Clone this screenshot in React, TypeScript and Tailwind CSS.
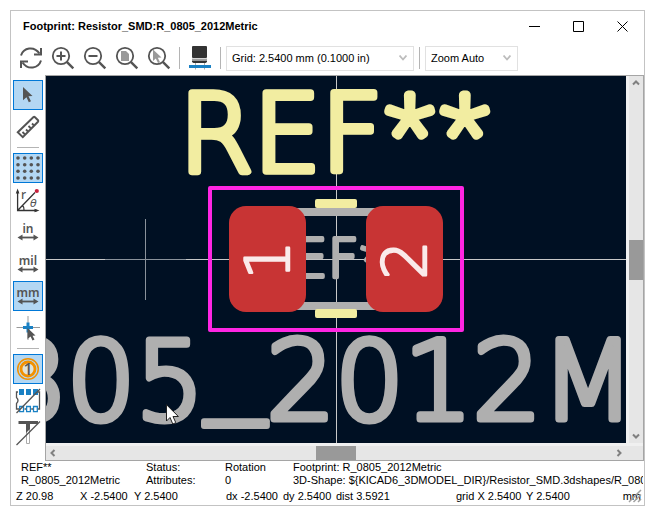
import type { ReactNode } from "react";

const INK = "#545454";

function ToolButton({ label, children }: { label: string; children: ReactNode }) {
  return (
    <button type="button" aria-label={label} title={label} className="mr-2 h-6 w-6 shrink-0">
      <svg viewBox="0 0 24 24" className="block h-6 w-6" fill="none" stroke={INK} strokeWidth="1.8">
        {children}
      </svg>
    </button>
  );
}

function Lens() {
  return (
    <>
      <circle cx="10" cy="10" r="8.2" />
      <path d="M15.8 15.8L22.3 22.3" strokeWidth="2.4" />
    </>
  );
}

function SideButton({ label, active = false, children }: { label: string; active?: boolean; children: ReactNode }) {
  return (
    <button
      type="button"
      aria-label={label}
      title={label}
      aria-pressed={active}
      className={
        active
          ? "h-[30px] w-[30px] shrink-0 border border-[#0078d7] bg-[#b3d7f3]"
          : "h-[30px] w-[30px] shrink-0 border border-transparent"
      }
    >
      <svg viewBox="1 1 28 28" className="block h-7 w-7" fill="none" stroke={INK} strokeWidth="1.6">
        {children}
      </svg>
    </button>
  );
}

function UnitIcon({ unit }: { unit: string }) {
  return (
    <>
      <text x="15" y="16" textAnchor="middle" fontFamily="Noto Sans, sans-serif" fontSize="12" fontWeight="600" fill={INK} stroke="none">
        {unit}
      </text>
      <path d="M7 20.5H23" strokeWidth="1.8" />
      <path d="M4.5 20.5L9.5 17.5V23.5ZM25.5 20.5L20.5 17.5V23.5Z" fill={INK} stroke="none" />
    </>
  );
}

function SideSeparator() {
  return <div className="my-[5px] h-px w-[22px] shrink-0 bg-[#b4b4b4]" />;
}

function ToolSeparator() {
  return <div className="h-[22px] w-px shrink-0 bg-[#b4b4b4]" />;
}

function Dropdown({ label, value, width }: { label: string; value: string; width: string }) {
  return (
    <div className={`relative mx-[5px] shrink-0 ${width}`}>
      <select
        aria-label={label}
        defaultValue={value}
        className="block h-[25px] w-full appearance-none border border-[#e1e1e1] bg-white pl-[5px] text-[11px] text-black"
      >
        <option>{value}</option>
      </select>
      <svg viewBox="0 0 8 6" className="pointer-events-none absolute right-[7px] top-[9px] h-1.5 w-2" fill="none" stroke="#bcbcbc" strokeWidth="1.8">
        <path d="M0.5 0.5L4 4.5L7.5 0.5" />
      </svg>
    </div>
  );
}

function ScrollArrow({ label, d }: { label: string; d: string }) {
  return (
    <button type="button" aria-label={label} className="flex h-[14px] w-[14px] shrink-0 items-center justify-center">
      <svg viewBox="0 0 8 8" className="h-2 w-2" fill="none" stroke="#808080" strokeWidth="2">
        <path d={d} />
      </svg>
    </button>
  );
}

function FootprintCanvas() {
  return (
    <svg
      viewBox="46 76 580 367"
      preserveAspectRatio="xMidYMid slice"
      className="block h-full w-full bg-[#001023]"
      fontFamily="DejaVu Sans, sans-serif"
      fontWeight="200"
      strokeLinejoin="round"
      strokeLinecap="round"
    >
      <g fill="#c8c8c8">
        <rect x="46" y="259" width="580" height="1" />
        <rect x="336" y="76" width="1" height="367" />
      </g>

      <text x="256" y="277" fontSize="54" fill="#afafaf" stroke="#afafaf" strokeWidth="4">
        REF<tspan fontFamily="Noto Sans" fontWeight="100" fontSize="52" dy="2">**</tspan>
      </text>

      <g fill="#afafaf">
        <rect x="290" y="208" width="92" height="8" />
        <rect x="290" y="302" width="92" height="8" />
      </g>
      <g fill="#f2eda1">
        <rect x="315" y="199" width="42" height="9" rx="2" />
        <rect x="315" y="309" width="42" height="9" rx="2" />
      </g>

      <text x="179" y="171" fontSize="107" fill="#f2eda1" stroke="#f2eda1" strokeWidth="7.5">
        REF<tspan fontFamily="Noto Sans" fontWeight="100" fontSize="100" strokeWidth="9">**</tspan>
      </text>
      <text x="-2" y="419" fontSize="108" fill="#afafaf" stroke="#afafaf" strokeWidth="7">
        805<tspan fontFamily="Liberation Mono" fontWeight="400" fontSize="104" strokeWidth="6" dy="-4">_</tspan><tspan dy="4">2012M</tspan>
      </text>

      <rect x="210" y="188" width="252" height="142" fill="none" stroke="#ff26e2" strokeWidth="4" />

      <g fill="#c83434">
        <rect x="229" y="206" width="77" height="106" rx="17" />
        <rect x="366" y="206" width="77" height="106" rx="17" />
      </g>
      <g fill="#faeaea" stroke="#faeaea" strokeWidth="2.4" fontSize="61" textAnchor="middle">
        <text transform="translate(289 260) rotate(-90)">1</text>
        <text transform="translate(426 260) rotate(-90)">2</text>
      </g>

      <g fill="#8a929b">
        <rect x="105" y="259" width="81" height="1" />
        <rect x="145" y="219" width="1" height="81" />
      </g>
      <path d="M166.5 405V421L170 417.5L172.8 424L175.8 422.7L173 416.5H178Z" fill="#fff" stroke="#222" strokeWidth="1" />
    </svg>
  );
}

export default function App() {
  return (
    <div className="flex min-h-screen bg-white p-[10px] font-['Liberation_Sans',Arial,sans-serif] text-[11px] text-black">
      <div className="flex min-w-0 flex-1 flex-col border border-[#c3c3c3] bg-white">
        <header className="flex h-[30px] shrink-0 items-center pl-3 pr-[14px]">
          <h1 className="flex-1 font-bold">Footprint: Resistor_SMD:R_0805_2012Metric</h1>
          <div className="flex gap-7">
            <button type="button" aria-label="Minimize" className="flex h-4 w-4 items-center justify-center">
              <svg viewBox="0 0 11 11" className="h-[11px] w-[11px]" stroke="#000"><path d="M0 5.5H11" /></svg>
            </button>
            <button type="button" aria-label="Maximize" className="flex h-4 w-4 items-center justify-center">
              <svg viewBox="0 0 11 11" className="h-[11px] w-[11px]" fill="none" stroke="#000"><path d="M0.5 0.5H10.5V10.5H0.5Z" /></svg>
            </button>
            <button type="button" aria-label="Close" className="flex h-4 w-4 items-center justify-center">
              <svg viewBox="0 0 11 11" className="h-[11px] w-[11px]" stroke="#000"><path d="M0.5 0.5L10.5 10.5M10.5 0.5L0.5 10.5" /></svg>
            </button>
          </div>
        </header>

        <div role="toolbar" className="flex h-[34px] shrink-0 items-center pl-2">
          <ToolButton label="Refresh">
            <path d="M2 9.5C4.5 1.5 15 -0.5 20.5 7.5M22 14.5C19.5 22.5 9 24.5 3.5 16.5" strokeWidth="2" />
            <path d="M22 2V8.4H15M2 22V15.6H9" strokeWidth="2" />
          </ToolButton>
          <ToolButton label="Zoom in">
            <Lens />
            <path d="M5.5 10H14.5M10 5.5V14.5" strokeWidth="2" />
          </ToolButton>
          <ToolButton label="Zoom out">
            <Lens />
            <path d="M5.5 10H14.5" strokeWidth="2" />
          </ToolButton>
          <ToolButton label="Zoom to fit">
            <Lens />
            <path d="M6 5H11L14 8V15H6Z" fill="#999" stroke="none" />
          </ToolButton>
          <ToolButton label="Zoom to selection">
            <Lens />
            <path d="M6 3.5L14.5 11.5L10.8 11.8L13 16.2L11 17L8.8 12.6L6 15Z" fill="#999" stroke="none" />
          </ToolButton>
          <ToolSeparator />
          <div className="flex pl-2">
            <ToolButton label="3D viewer">
              <path d="M7.5 16V23.5M16.5 16V23.5" stroke="#aaa" strokeWidth="1" />
              <rect x="4" y="0" width="15" height="12" rx="1" fill="#333" stroke="none" />
              <path d="M4 13.2H19" stroke="#777" strokeWidth="1" />
              <path d="M4 14.5H19V16L17.5 17H5.5L4 16Z" fill="#333" stroke="none" />
              <rect x="1" y="19" width="22" height="3" fill="#1a81c4" stroke="none" />
            </ToolButton>
          </div>
          <ToolSeparator />
          <Dropdown label="Grid" value="Grid: 2.5400 mm (0.1000 in)" width="w-[188px]" />
          <ToolSeparator />
          <Dropdown label="Zoom" value="Zoom Auto" width="w-[93px]" />
        </div>

        <main className="flex min-h-0 flex-1">
          <div role="toolbar" className="flex w-[34px] shrink-0 flex-col items-center pt-[5px]">
            <div className="flex flex-col gap-0.5">
              <SideButton label="Select item" active>
                <path d="M10 7L19.5 16L15.5 16.3L18 21.3L15.8 22.3L13.5 17.3L10 20.3Z" fill={INK} stroke="none" />
              </SideButton>
              <SideButton label="Measure distance">
                <path d="M4.8 20.3L20.5 5Q21.2 4.5 22 5.2L25 8.2Q25.6 9 25 9.7L9.8 25.2Z" strokeWidth="2" />
                <path d="M12 22.5L9.5 20M15 19.5L13 17.5M18 16.5L15.5 14M21 13.5L19 11.5" strokeWidth="1.8" />
              </SideButton>
            </div>
            <SideSeparator />
            <div className="flex flex-col gap-0.5">
              <SideButton label="Show grid" active>
                {[5, 11.7, 18.3, 25].map((y) =>
                  [5, 11.7, 18.3, 25].map((x) => <circle key={`${x}-${y}`} cx={x} cy={y} r="1.8" fill={INK} stroke="none" />),
                )}
              </SideButton>
              <SideButton label="Polar coordinates">
                <path d="M4.6 6V25.5H24M4.6 25.5L22 7.5M9.5 20.5Q11.5 22.5 11 25" strokeWidth="1.3" stroke="#333" />
                <path d="M4.6 3.5L2.8 8.5H6.4ZM26.5 25.5L21.5 23.7V27.3Z" fill="#333" stroke="none" />
                <circle cx="23.8" cy="6" r="2.1" fill="#c8213c" stroke="none" />
                <text x="8" y="14" fontFamily="Noto Sans, sans-serif" fontSize="12" fontWeight="500" fill={INK} stroke="none">r</text>
                <text x="17" y="22" fontFamily="DejaVu Sans, sans-serif" fontSize="11" fontStyle="italic" fill={INK} stroke="none">θ</text>
              </SideButton>
              <SideButton label="Inches"><UnitIcon unit="in" /></SideButton>
              <SideButton label="Mils"><UnitIcon unit="mil" /></SideButton>
              <SideButton label="Millimeters" active><UnitIcon unit="mm" /></SideButton>
              <SideButton label="Full-window crosshair">
                <path d="M3.5 14.5H27M15 3V27" stroke="#999" strokeWidth="1" />
                <path d="M10 14.5H20M15 9.5V19.5" stroke="#1a81c4" strokeWidth="3" />
                <path d="M14.5 15L22.5 22.5L19.5 22.8L21.5 26.6L19.5 27.5L17.6 23.6L14.5 26Z" fill={INK} stroke="none" />
              </SideButton>
            </div>
            <SideSeparator />
            <div className="flex flex-col gap-0.5">
              <SideButton label="Show pad numbers" active>
                <circle cx="15" cy="15" r="10.3" stroke="#f29100" strokeWidth="1.5" />
                <circle cx="15" cy="15" r="7" fill="#dfe3da" stroke="#f29100" strokeWidth="2.8" />
                <text x="15" y="21" textAnchor="middle" fontFamily="Noto Sans, sans-serif" fontSize="17" fontWeight="500" fill={INK} stroke="none">1</text>
              </SideButton>
              <SideButton label="Sketch pads">
                <path d="M5 6H3.5V11.5Q6.5 14.5 3.5 17.5V23H6M24 6H26.5V23H24" strokeWidth="1.3" />
                <path d="M6 3H11V9H6ZM13 3H18V9H13ZM20 3H25V9H20Z" fill="#1a81c4" stroke="none" />
                <path d="M6.7 20.5H10.5V25.7H6.7ZM13.6 20.5H17.4V25.7H13.6ZM20.5 20.5H24.3V25.7H20.5Z" fill="#fff" stroke="#1a81c4" strokeWidth="1.3" />
                <path d="M11.5 23H13M18.2 23H20" strokeWidth="1.3" />
                <path d="M3.5 27L27 3" strokeWidth="1.3" />
              </SideButton>
              <SideButton label="Sketch text">
                <path d="M13.5 13V25.5H16.5V8" stroke="#aaa" strokeWidth="1" />
                <path d="M5.5 3H25V6H17V11L13 15V6H5.5Z" fill={INK} stroke="none" />
                <path d="M3.5 27L27 3.5" strokeWidth="1.3" />
              </SideButton>
            </div>
          </div>

          <div className="flex min-w-0 flex-1 flex-col border border-[#a5a5a5] bg-[#e6e6e6]">
            <div className="flex min-h-0 flex-1">
              <div className="relative min-w-0 flex-1">
                <div className="absolute inset-0">
                  <FootprintCanvas />
                </div>
              </div>
              <div className="flex w-[17px] shrink-0 flex-col items-end justify-between border-l-[3px] border-[#f0f0f0]">
                <ScrollArrow label="Scroll up" d="M1 5.5L4 2.5L7 5.5" />
                <div className="h-10 w-[14px] bg-[#999]" />
                <ScrollArrow label="Scroll down" d="M1 2.5L4 5.5L7 2.5" />
              </div>
            </div>
            <div className="flex h-[17px] shrink-0 items-end justify-between border-t-[3px] border-[#f0f0f0] pr-[17px]">
              <ScrollArrow label="Scroll left" d="M5.5 1L2.5 4L5.5 7" />
              <div className="h-[14px] w-10 bg-[#999]" />
              <ScrollArrow label="Scroll right" d="M2.5 1L5.5 4L2.5 7" />
            </div>
          </div>
        </main>

        <footer className="relative shrink-0 overflow-hidden whitespace-nowrap">
          <div className="grid grid-cols-[125px_79px_68px_minmax(0,1fr)] pl-[10px] pr-px leading-[13px]">
            <span>REF**</span>
            <span>Status:</span>
            <span>Rotation</span>
            <span>Footprint: R_0805_2012Metric</span>
            <span>R_0805_2012Metric</span>
            <span>Attributes:</span>
            <span>0</span>
            <span className="overflow-hidden">{"3D-Shape: ${KICAD6_3DMODEL_DIR}/Resistor_SMD.3dshapes/R_0805_2012Metric.wrl"}</span>
          </div>
          <div className="flex pl-[5px] pr-[3px] leading-[18px]">
            <span className="w-16">Z 20.98</span>
            <span className="w-[54px]">X -2.5400</span>
            <span className="w-[92px]">Y 2.5400</span>
            <span className="w-[57px]">dx -2.5400</span>
            <span className="w-[53px]">dy 2.5400</span>
            <span className="w-[120px]">dist 3.5921</span>
            <span className="w-[70px]">grid X 2.5400</span>
            <span className="flex-1">Y 2.5400</span>
            <span>mm</span>
          </div>
          <svg viewBox="0 0 14 14" className="absolute bottom-0.5 right-0.5 h-[14px] w-[14px]" stroke="#a0a0a0" strokeWidth="1.5">
            <path d="M1 13L13 1M5.5 13L13 5.5M10 13L13 10" />
          </svg>
        </footer>
      </div>
    </div>
  );
}
